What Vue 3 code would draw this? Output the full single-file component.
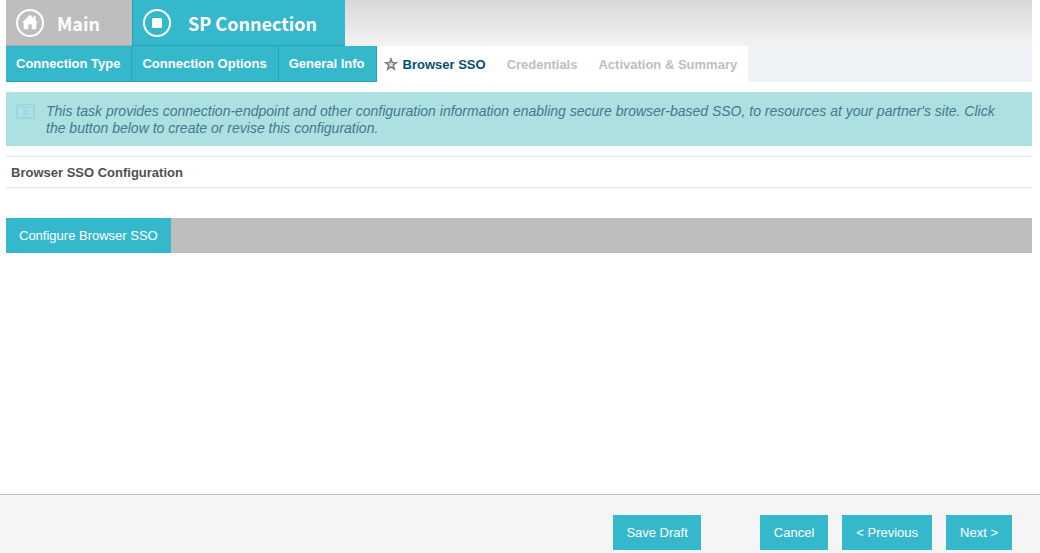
<script setup>
const completedSteps = ['Connection Type', 'Connection Options', 'General Info']
const upcomingSteps = ['Credentials', 'Activation & Summary']
</script>

<template>
  <div class="page">
    <div class="content">
      <nav class="tasks" aria-label="Tasks">
        <a class="task main" href="#main">
          <svg viewBox="0 0 28 28" aria-hidden="true">
            <circle cx="14" cy="14" r="13" fill="none" stroke="#fff" stroke-width="2" />
            <path d="M14 6 21.5 13.5H20V20H16V15H12V20H8V13.5H6.5L14 6Z" fill="#fff" stroke="#fff" stroke-width=".6" stroke-linejoin="round" />
            <path d="M17.6 7h2v4h-2z" fill="#fff" />
          </svg>
          <span>Main</span>
        </a>
        <a class="task current" href="#sp-connection" aria-current="page">
          <svg viewBox="0 0 28 28" aria-hidden="true">
            <circle cx="14" cy="14" r="13" fill="none" stroke="#fff" stroke-width="2" />
            <rect x="9" y="9" width="10" height="10" rx="1.5" fill="#fff" />
          </svg>
          <span>SP Connection</span>
        </a>
      </nav>

      <nav class="steps" aria-label="Steps">
        <a v-for="step in completedSteps" :key="step" class="step done" href="#step">{{ step }}</a>
        <a class="step active" href="#browser-sso" aria-current="step">
          <svg viewBox="0 0 14 14" aria-hidden="true">
            <path d="M7 2 8.3 5.5 12.3 5.7 9.2 8.2 10.3 12.2 7 10 3.7 12.2 4.8 8.2 1.7 5.7 5.7 5.5Z" fill="#e4e4e4" stroke="#7c7c7c" stroke-width="1.5" />
          </svg>
          <span>Browser SSO</span>
        </a>
        <span v-for="step in upcomingSteps" :key="step" class="step upcoming">{{ step }}</span>
      </nav>

      <div class="notice">
        <svg viewBox="0 0 19 15" aria-hidden="true">
          <rect x="1" y="1" width="17" height="13" rx=".5" fill="none" stroke="#9bd4e2" stroke-width="2" />
          <path d="M1 3.5h17" stroke="#9bd4e2" stroke-width="1" />
          <path d="M7.5 5.5 11 8.5 7.5 11.5" fill="none" stroke="#9bd4e2" stroke-width="1.8" />
          <path d="M2 2h1M4 2h1M6 2h11" stroke="#b0dfe5" stroke-width="1" />
        </svg>
        <p>This task provides connection-endpoint and other configuration information enabling secure browser-based SSO, to resources at your partner's site. Click the button below to create or revise this configuration.</p>
      </div>

      <h2>Browser SSO Configuration</h2>

      <div class="action-bar">
        <button type="button">Configure Browser SSO</button>
      </div>
    </div>

    <footer>
      <button type="button" class="save">Save Draft</button>
      <button type="button">Cancel</button>
      <button type="button">&lt; Previous</button>
      <button type="button">Next &gt;</button>
    </footer>
  </div>
</template>

<style>
body {
  background: #fff;
}
</style>

<style scoped>
.page {
  display: flex;
  flex-direction: column;
  min-height: 100vh;
  font-family: "Liberation Sans", Arial, sans-serif;
  font-size: 13px;
}

.content {
  flex: 1;
  padding: 0 8px 0 6px;
}

.tasks {
  display: flex;
  height: 46px;
  background: linear-gradient(#d8d8d8, #f3f3f3);
}

.task {
  display: flex;
  align-items: center;
  gap: 13px;
  box-sizing: border-box;
  padding: 0 28px 0 10px;
  border-bottom: 1px solid #27a3b9;
  background: #36b8cc;
  color: #fff;
  font: bold 18px "Noto Sans CJK SC", sans-serif;
  text-decoration: none;
}

.task.current {
  gap: 17px;
  border-left: 1px solid #27a3b9;
}

.task.main {
  padding-right: 32px;
  border-bottom-color: #a8a8a8;
  background: #bebebe;
}

.task svg {
  width: 28px;
  height: 28px;
}

.steps {
  display: flex;
  height: 36px;
  background: #eff3f8;
  font-weight: bold;
}

.step {
  display: flex;
  align-items: center;
  box-sizing: border-box;
  padding: 0 11px 0 10px;
  background: #fff;
  text-decoration: none;
}

.step.done {
  border-right: 1px solid #27a3b9;
  border-bottom: 1px solid #27a3b9;
  background: #36b8cc;
  color: #fff;
}

.step.active {
  gap: 5px;
  padding-left: 7px;
  color: #05506e;
}

.step.active svg {
  width: 14px;
  height: 14px;
}

.step.upcoming {
  color: #bebebe;
}

.notice {
  display: flex;
  align-items: flex-start;
  gap: 11px;
  margin-top: 10px;
  padding: 11px 16px 9px 10px;
  background: #ade1e1;
  color: #3f7a8d;
}

.notice svg {
  flex: none;
  width: 19px;
  height: 15px;
  margin-top: 1px;
}

.notice p {
  margin: 0;
  font-size: 14px;
  font-style: italic;
  line-height: 17px;
}

h2 {
  margin: 10px 0 30px;
  padding: 2px 5px 0;
  border-top: 1px solid #e5e5e5;
  border-bottom: 1px solid #e5e5e5;
  color: #505050;
  font-size: 13px;
  line-height: 28px;
}

.action-bar {
  display: flex;
  background: #bebebe;
}

button {
  height: 35px;
  padding: 0 14px;
  border: 0;
  border-radius: 0;
  background: #36b8cc;
  color: #fff;
  font: inherit;
}

.action-bar button,
.save {
  padding: 0 13px;
}

footer {
  display: flex;
  justify-content: flex-end;
  gap: 14px;
  padding: 20px 28px 3px;
  border-top: 1px solid #bebebe;
  background: #f5f5f5;
}

.save {
  margin-right: 45px;
}
</style>
